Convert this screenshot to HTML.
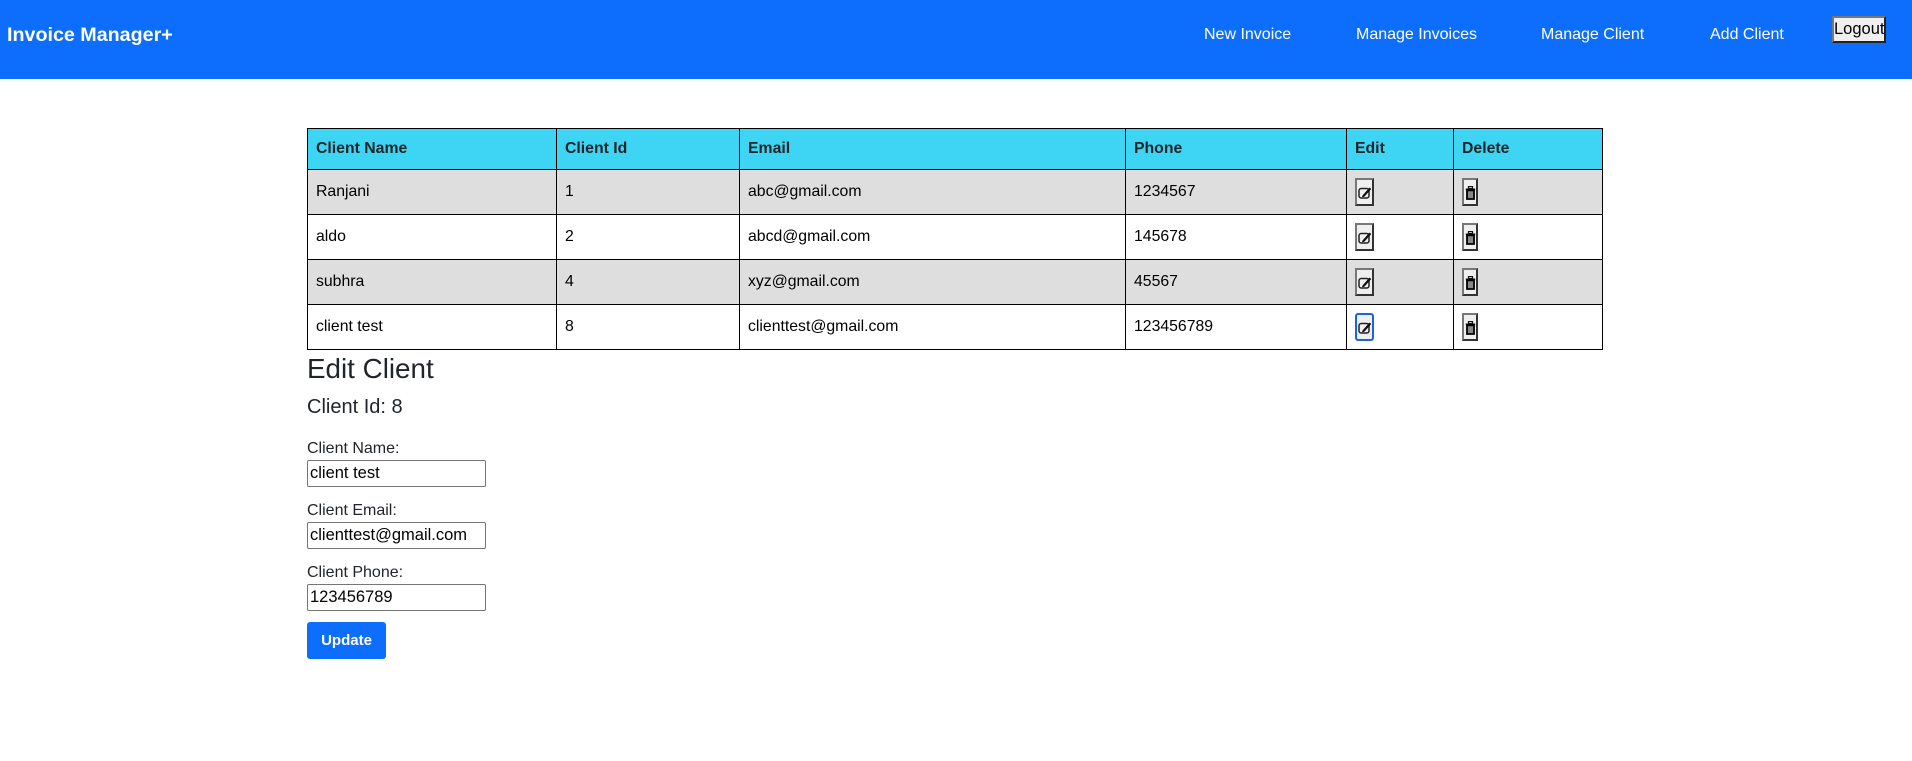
<!DOCTYPE html>
<html><head><style>
*{box-sizing:border-box;margin:0;padding:0}
body{width:1912px;height:761px;font-family:"Liberation Sans",Arial,sans-serif;background:#fff;color:#212529;position:relative;overflow:hidden}
.nav{position:absolute;left:0;top:0;width:1912px;height:79px;background:#0d6efd}
.brand{position:absolute;left:7px;top:24px;color:#fff;font-weight:bold;font-size:19.7px}
.nl{position:absolute;top:26px;color:#fff;font-size:16px}
.logout{position:absolute;left:1832px;top:16px;width:54px;height:27px;background:#efefef;border:2px outset #777;font-size:16.5px;color:#000;text-align:center;line-height:22px}
table{position:absolute;left:307px;top:128px;width:1296px;border-collapse:collapse;font-size:15.8px;color:#000}
td,th{border:1.5px solid #000;padding:0 8px;text-align:left;vertical-align:middle}
th{background:#3dd5f3;height:41px;font-weight:600;color:#212529}
td{height:45px}
tr.g td{background:#dedede}
.eb{display:inline-block;width:19px;height:28px;border:2px solid #444;border-color:#777 #333 #333 #777;background:#efefef;vertical-align:middle;position:relative}
.eb.f{border:2px solid #1a66d6;border-radius:3px}
.db{display:inline-block;width:16px;height:28px;border:2px solid #444;border-color:#777 #333 #333 #777;background:#efefef;vertical-align:middle;position:relative}
.abs{position:absolute}
h2{position:absolute;left:307px;top:353px;font-size:27.8px;font-weight:500}
h3{position:absolute;left:307px;top:396px;font-size:20px;font-weight:500}
.lb{position:absolute;left:307px;font-size:16px}
.in{position:absolute;left:307px;width:179px;height:27px;border:1px solid #767676;border-radius:2px;font-size:16.5px;color:#000;padding-left:2px;line-height:25px}
.btn{position:absolute;left:307px;top:622px;width:79px;height:37px;background:#0d6efd;color:#fff;border-radius:3px;font-weight:bold;font-size:15px;text-align:center;line-height:37px}
</style></head><body>
<svg width="0" height="0" style="position:absolute">
<symbol id="pe" viewBox="0 0 14 13"><rect x="1" y="2.5" width="10" height="9.5" rx="2.2" fill="none" stroke="#222" stroke-width="1.5"/><path d="M4.5 9.5 L11.5 1.5 L13.3 3 L6.3 10.8 L4 11.2Z" fill="#111"/></symbol>
<symbol id="tr" viewBox="0 0 11 14"><rect x="3.5" y="0.5" width="4" height="2" fill="none" stroke="#111" stroke-width="1.2"/><rect x="0.8" y="2.5" width="9.4" height="1.8" fill="#111"/><path d="M2 4.3 h7 v8.7 h-7z" fill="#888" stroke="#000" stroke-width="1.8"/></symbol>
</svg>
<div class="nav">
<div class="brand">Invoice Manager+</div>
<div class="nl" style="left:1204px">New Invoice</div>
<div class="nl" style="left:1356px">Manage Invoices</div>
<div class="nl" style="left:1541px">Manage Client</div>
<div class="nl" style="left:1710px">Add Client</div>
<div class="logout">Logout</div>
</div>
<table>
<colgroup><col style="width:249px"><col style="width:183px"><col style="width:386px"><col style="width:221px"><col style="width:107px"><col></colgroup>
<tr><th>Client Name</th><th>Client Id</th><th>Email</th><th>Phone</th><th>Edit</th><th>Delete</th></tr>
<tr class="g"><td>Ranjani</td><td>1</td><td>abc@gmail.com</td><td>1234567</td><td><span class="eb"><svg class="abs" style="left:1px;top:6px" width="14" height="13"><use href="#pe"/></svg></span></td><td><span class="db"><svg class="abs" style="left:1px;top:6px" width="11" height="14"><use href="#tr"/></svg></span></td></tr>
<tr><td>aldo</td><td>2</td><td>abcd@gmail.com</td><td>145678</td><td><span class="eb"><svg class="abs" style="left:1px;top:6px" width="14" height="13"><use href="#pe"/></svg></span></td><td><span class="db"><svg class="abs" style="left:1px;top:6px" width="11" height="14"><use href="#tr"/></svg></span></td></tr>
<tr class="g"><td>subhra</td><td>4</td><td>xyz@gmail.com</td><td>45567</td><td><span class="eb"><svg class="abs" style="left:1px;top:6px" width="14" height="13"><use href="#pe"/></svg></span></td><td><span class="db"><svg class="abs" style="left:1px;top:6px" width="11" height="14"><use href="#tr"/></svg></span></td></tr>
<tr><td>client test</td><td>8</td><td>clienttest@gmail.com</td><td>123456789</td><td><span class="eb f"><svg class="abs" style="left:1px;top:6px" width="14" height="13"><use href="#pe"/></svg></span></td><td><span class="db"><svg class="abs" style="left:1px;top:6px" width="11" height="14"><use href="#tr"/></svg></span></td></tr>
</table>
<h2>Edit Client</h2>
<h3>Client Id: 8</h3>
<div class="lb" style="top:440px">Client Name:</div>
<div class="in" style="top:460px">client test</div>
<div class="lb" style="top:502px">Client Email:</div>
<div class="in" style="top:522px">clienttest@gmail.com</div>
<div class="lb" style="top:564px">Client Phone:</div>
<div class="in" style="top:584px">123456789</div>
<div class="btn">Update</div>
</body></html>
